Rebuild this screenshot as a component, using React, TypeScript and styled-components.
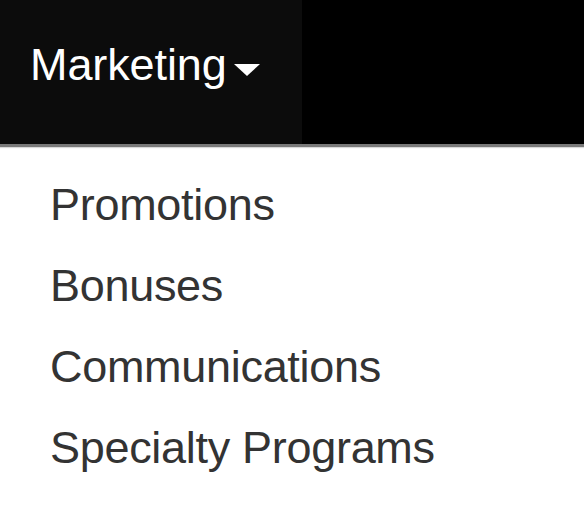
import styled, { createGlobalStyle } from "styled-components";

const GlobalStyle = createGlobalStyle`
  html, body {
    margin: 0;
    padding: 0;
    background: #ffffff;
  }
  body {
    font-family: "Liberation Sans", Arial, Helvetica, sans-serif;
  }
`;

const NavBar = styled.nav`
  display: flex;
  height: 144px;
  background: #000000;
  border-bottom: 3px solid #7a7a7a;
  box-shadow: 0 1px 1px rgba(0, 0, 0, 0.15);
`;

const NavItem = styled.button<{ $open?: boolean }>`
  display: flex;
  align-items: center;
  width: 302px;
  height: 144px;
  padding: 0 0 15px 30px;
  border: none;
  background: ${(props) => (props.$open ? "#0c0c0c" : "transparent")};
  color: #ffffff;
  font-family: inherit;
  font-size: 45px;
  letter-spacing: -0.1px;
  text-align: left;
  cursor: pointer;
  box-sizing: border-box;
`;

const Caret = styled.svg`
  margin-left: 7px;
  margin-top: 10px;
`;

const Menu = styled.ul`
  list-style: none;
  margin: 0;
  padding: 17px 0 0 50px;
`;

const MenuItem = styled.li`
  font-size: 45px;
  line-height: 81px;
  color: #333333;
  letter-spacing: -0.3px;
`;

const items = ["Promotions", "Bonuses", "Communications", "Specialty Programs"];

export default function App() {
  return (
    <>
      <GlobalStyle />
      <NavBar>
        <NavItem $open>
          Marketing
          <Caret width="26" height="12" viewBox="0 0 26 12">
            <path d="M0 0 L26 0 L13 12 Z" fill="#ffffff" />
          </Caret>
        </NavItem>
      </NavBar>
      <Menu>
        {items.map((item) => (
          <MenuItem key={item}>{item}</MenuItem>
        ))}
      </Menu>
    </>
  );
}
